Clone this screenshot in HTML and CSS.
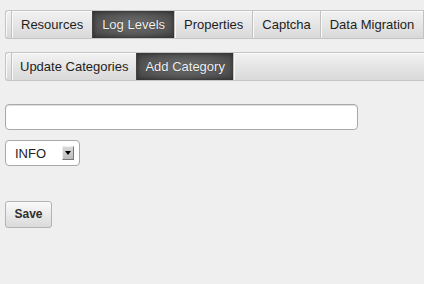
FILE: index.html
```html
<!DOCTYPE html>
<html>
<head>
<meta charset="utf-8">
<link rel="stylesheet" href="styles.css">
</head>
<body>
<div class="page">
  <div class="tabbar top">
    <div class="cap"></div>
    <div class="tab">Resources</div>
    <div class="tab active">Log Levels</div>
    <div class="tab">Properties</div>
    <div class="tab">Captcha</div>
    <div class="tab">Data Migration</div>
    <div class="tab fill"></div>
  </div>
  <div class="tabbar sub">
    <div class="cap"></div>
    <div class="tab">Update Categories</div>
    <div class="tab active">Add Category</div>
    <div class="tab fill"></div>
  </div>
  <div class="form">
    <div class="textbox"></div>
    <div class="select">
      <span class="select-label">INFO</span>
      <span class="select-btn"><span class="tri"></span></span>
    </div>
    <div class="button">Save</div>
  </div>
</div>
</body>
</html>
```
FILE: styles.css
```css
html, body {
  margin: 0;
  padding: 0;
  background: #efeff0;
  font-family: "Liberation Sans", Arial, sans-serif;
  font-size: 13px;
  overflow: hidden;
}
.page {
  padding: 10px 0 0 5px;
}
.tabbar {
  display: flex;
  height: 27px;
  border: 1px solid #c4c4c4;
  border-right: none;
  border-radius: 3px 0 0 3px;
  background: linear-gradient(#f2f2f2, #d9d9d9);
  box-shadow: inset 1px 1px 0 #fafafa;
}
.tabbar.sub {
  margin-top: 13px;
}
.cap {
  width: 5px;
  flex: none;
}
.tab {
  flex: none;
  padding: 0 9px;
  line-height: 27px;
  color: #1e1e1e;
  border-left: 1px solid #c2c2c2;
  box-shadow: inset 1px 0 0 #f8f8f8;
  white-space: nowrap;
}
.tabbar.sub .tab {
  padding: 0 8px;
}
.tab.active {
  color: #f4f4f4;
  background: radial-gradient(ellipse at center, #6d6d6d 0%, #555 60%, #3e3e3e 100%);
  box-shadow: inset 0 0 4px #2a2a2a;
  border-left-color: #444;
  text-shadow: 0 0 1px #222;
}
.tab.fill {
  flex: 1;
}
.form {
  padding-top: 23px;
}
.textbox {
  width: 351px;
  height: 24px;
  border: 1px solid #a9a9a9;
  border-radius: 4px;
  background: #fff;
  box-shadow: inset 0 1px 1px #ddd;
}
.select {
  margin-top: 10px;
  width: 72px;
  height: 24px;
  border: 1px solid #a9a9a9;
  border-radius: 4px;
  background: #fff;
  display: flex;
  align-items: center;
  padding-left: 1px;
}
.select-label {
  flex: 1;
  padding-left: 8px;
  color: #222;
}
.select-btn {
  width: 10px;
  height: 12px;
  margin-right: 5px;
  background: linear-gradient(#d8d8d8, #bdbdbd);
  border-right: 1px solid #777;
  border-bottom: 1px solid #777;
  border-top: 1px solid #eee;
  border-left: 1px solid #eee;
  display: flex;
  align-items: center;
  justify-content: center;
}
.tri {
  width: 0;
  height: 0;
  border-left: 3px solid transparent;
  border-right: 3px solid transparent;
  border-top: 4px solid #000;
}
.button {
  margin-top: 35px;
  width: 45px;
  height: 25px;
  border: 1px solid #b3b3b3;
  border-radius: 3px;
  background: linear-gradient(#fafafa, #dadada);
  font-weight: bold;
  font-size: 12px;
  color: #2f2f2f;
  line-height: 25px;
  text-align: center;
}
```
